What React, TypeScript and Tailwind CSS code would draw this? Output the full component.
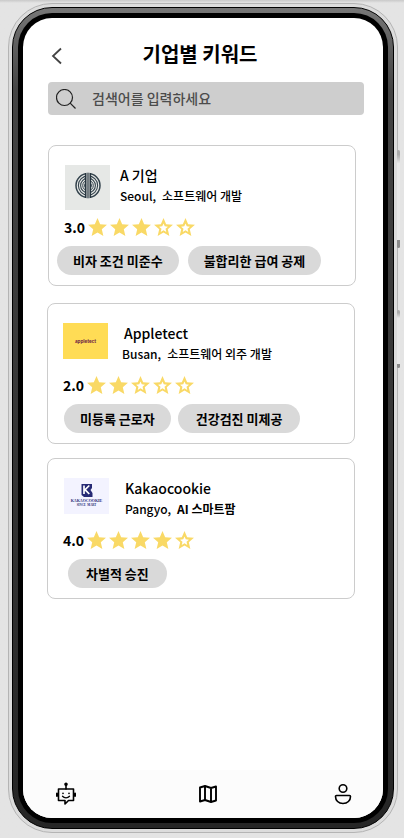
import type { ReactNode } from "react";

type Company = {
  name: string;
  city: string;
  field: string;
  fieldClass: string;
  rating: number;
  keywords: { text: string; padding: string }[];
  logo: ReactNode;
  cardClass: string;
  headClass: string;
  nameClass: string;
  chipsClass: string;
};

const STAR =
  "M12 17.27 18.18 21l-1.64-7.03L22 9.24l-7.19-.61L12 2 9.19 8.63 2 9.24l5.46 4.73L5.82 21z";
const STAR_HOLE =
  "M12 14.900l-2.900 1.750.77-3.300-2.560-2.220 3.380-.29L12 7.700l1.320 3.140 3.380.29-2.560 2.220.77 3.300z";

function Star({ filled }: { filled: boolean }) {
  return (
    <svg viewBox="2 2 20 19" className="h-[18px] w-[19px]" fill="#f9d966" aria-hidden="true">
      <path fillRule="evenodd" d={filled ? STAR : STAR + STAR_HOLE} />
    </svg>
  );
}

function RingsLogo() {
  return (
    <svg viewBox="0 0 45 45" className="h-[45px] w-[45px] shrink-0" role="img" aria-label="A 기업">
      <rect width="45" height="45" fill="#e6e8e6" />
      <g fill="none" stroke="#34434d">
        <circle cx="23" cy="20.500" r="12" strokeWidth="1.500" />
        <circle cx="23" cy="20.500" r="9.600" strokeWidth="1.100" />
        <circle cx="23" cy="20.500" r="7.400" strokeWidth="1.100" />
        <circle cx="23" cy="20.500" r="5.300" strokeWidth="1" />
      </g>
      <ellipse cx="23" cy="20.500" rx="4" ry="3" fill="#4a5860" />
      <rect x="20" y="8" width="6" height="25" fill="#e6e8e6" />
      <path d="M20.700 8v25M25.300 8v25" stroke="#27353f" strokeWidth="1.600" />
      <path d="M23 8v25" stroke="#27353f" strokeWidth="1.200" />
    </svg>
  );
}

function AppletectLogo() {
  return (
    <div className="flex h-9 w-[45px] shrink-0 items-center justify-center bg-[#ffdc55] font-['Lato','Open_Sans',sans-serif] text-[5px] leading-none font-black text-[#701c45]">
      appletect
    </div>
  );
}

function KakaocookieLogo() {
  return (
    <div className="flex h-9 w-[45px] shrink-0 flex-col items-center bg-[#f3f3ff] pt-[6px] font-['Liberation_Serif',serif] text-[#262a75]">
      <svg viewBox="0 0 12 13" className="h-[13px] w-3" aria-hidden="true">
        <path d="M0.500 0h10.500v4l-1.500 2 2 3v4H3l-2.500-2z" fill="#262a75" />
        <path d="M3 1.500v8.500M8.300 1.500 4 5.700 8.300 10" stroke="#fff" strokeWidth="1.700" fill="none" />
      </svg>
      <span className="mt-px text-[4px] leading-[5px] font-bold">KAKAOCOOKIE</span>
      <span className="text-[3px] leading-[4px] font-bold">SINCE &nbsp;MART</span>
    </div>
  );
}

const companies: Company[] = [
  {
    name: "A 기업",
    city: "Seoul,",
    field: "소프트웨어 개발",
    fieldClass: "font-medium",
    rating: 3,
    keywords: [
      { text: "비자 조건 미준수", padding: "px-4" },
      { text: "불합리한 급여 공제", padding: "px-4" },
    ],
    logo: <RingsLogo />,
    cardClass: "ml-px",
    headClass: "gap-[10px] pl-4",
    nameClass: "",
    chipsClass: "gap-[9px] pl-2",
  },
  {
    name: "Appletect",
    city: "Busan,",
    field: "소프트웨어 외주 개발",
    fieldClass: "font-medium",
    rating: 2,
    keywords: [
      { text: "미등록 근로자", padding: "px-4" },
      { text: "건강검진 미제공", padding: "px-[18px]" },
    ],
    logo: <AppletectLogo />,
    cardClass: "mr-px mt-[17px]",
    headClass: "gap-[14px] pl-[15px]",
    nameClass: "pl-0.5",
    chipsClass: "gap-[7px] pl-4",
  },
  {
    name: "Kakaocookie",
    city: "Pangyo,",
    field: "AI 스마트팜",
    fieldClass: "font-bold",
    rating: 4,
    keywords: [{ text: "차별적 승진", padding: "px-[18px]" }],
    logo: <KakaocookieLogo />,
    cardClass: "mr-px mt-[14px]",
    headClass: "gap-4 pl-4",
    nameClass: "",
    chipsClass: "pl-5",
  },
];

function CompanyCard({ company }: { company: Company }) {
  return (
    <li className={`rounded-lg border border-[#cccccc] pt-[19px] pb-[10px] ${company.cardClass}`}>
      <div className={`flex h-[45px] items-start ${company.headClass}`}>
        {company.logo}
        <div>
          <h2 className={`text-sm leading-5 font-medium ${company.nameClass}`}>{company.name}</h2>
          <p className="flex gap-[6px] text-xs leading-[22px] font-medium">
            <span>{company.city}</span>
            <span className={company.fieldClass}>{company.field}</span>
          </p>
        </div>
      </div>
      <div className="mt-[7px] flex h-5 items-center gap-[3px] pl-[15px]">
        <span className="text-sm leading-5 font-bold">{company.rating.toFixed(1)}</span>
        <div className="flex gap-[3px]">
          {[1, 2, 3, 4, 5].map((n) => (
            <Star key={n} filled={n <= company.rating} />
          ))}
        </div>
      </div>
      <div className={`mt-[9px] flex ${company.chipsClass}`}>
        {company.keywords.map(({ text, padding }) => (
          <button
            key={text}
            type="button"
            className={`h-[29px] rounded-full bg-[#d9d9d9] text-[13px] leading-5 font-bold whitespace-nowrap ${padding}`}
          >
            {text}
          </button>
        ))}
      </div>
    </li>
  );
}

function BottomNav() {
  return (
    <nav className="flex h-12 items-center justify-between bg-[#fcfcfc] pr-[31px] pl-8">
      <button type="button" aria-label="챗봇" className="w-[26px]">
        <svg viewBox="0 0 22 24" className="h-6 w-[22px]" fill="none" stroke="#000" strokeWidth="1.600" strokeLinejoin="round" strokeLinecap="round">
          <path d="M3.500 7h15v11.500h-5l-3.500 3.500v-3.500H3.500z" />
          <path d="M11 7V2.500" />
          <path d="M2 11.500v2.500M20 11.500v2.500" strokeWidth="2" />
          <circle cx="11" cy="2.300" r="1" fill="#000" />
          <path d="M7.500 14.300c1.800 2 5.200 2 7 0" strokeWidth="1.300" />
          <path d="M8 11.300h.01M14 11.300h.01" strokeWidth="1.700" />
        </svg>
      </button>
      <button type="button" aria-label="지도">
        <svg viewBox="0 0 20 20" className="h-5 w-5" fill="none" stroke="#000" strokeWidth="1.900" strokeLinejoin="round">
          <path d="M2 3.500 7 2l6 2 5-1.500v14L13 18l-6-2-5 1.500zM7 2v14M13 4v14" />
        </svg>
      </button>
      <button type="button" aria-label="내 정보">
        <svg viewBox="0 0 18 22" className="h-[22px] w-[18px]" fill="none" stroke="#000" strokeWidth="1.600">
          <circle cx="9" cy="5.500" r="3.800" />
          <path d="M2.500 12.500h13a1 1 0 0 1 1 1c0 4-3 7-7.500 7s-7.500-3-7.500-7a1 1 0 0 1 1-1z" />
        </svg>
      </button>
    </nav>
  );
}

export default function App() {
  return (
    <div className="flex min-h-screen flex-col bg-[#e4e4e4] bg-linear-to-b from-[#c9c9c9] to-[#e4e4e4] to-[3px] pt-[3px] pr-[6px] pb-[5px] pl-2 font-['Noto_Sans_CJK_KR',sans-serif] text-black">
      <div className="relative flex grow flex-col rounded-[44px] border border-[#b4b4b4] bg-[#dcdcdc] p-[3px]">
        <div className="absolute top-[146px] -right-[3px] h-[98px] w-[3px] rounded-full bg-linear-to-b from-[#aaaaaa] from-5% via-[#e8e8e8] via-15% to-[#e8e8e8] to-90% border-b-8 border-[#8a8a8a]" />
        <div className="absolute top-[306px] -right-[3px] h-[58px] w-[3px] rounded-full bg-linear-to-b from-[#aaaaaa] from-5% via-[#e8e8e8] via-15% to-[#e8e8e8] to-90% border-b-4 border-[#8a8a8a]" />
        <div className="flex grow flex-col rounded-[40px] border border-black bg-linear-to-b from-[#777777] via-[#444444] via-10% to-[#262626] p-[5px]">
          <div className="flex grow flex-col rounded-[34px] bg-black p-[5px]">
            <main className="flex grow flex-col overflow-hidden rounded-[29px] bg-white">
              <header className="relative flex h-16 items-end justify-center pb-[14px]">
                <button type="button" aria-label="뒤로" className="absolute bottom-[17px] left-7">
                  <svg viewBox="0 0 12 18" className="h-[18px] w-3" fill="none" stroke="#444" strokeWidth="1.800">
                    <path d="M10 1.500 2 9l8 7.500" />
                  </svg>
                </button>
                <h1 className="pr-1.5 text-xl leading-7 font-bold">기업별 키워드</h1>
              </header>
              <label className="mr-[19px] ml-[25px] flex h-[33px] items-center gap-4 rounded bg-[#cecece] pl-2">
                <svg viewBox="0 0 20 20" className="h-5 w-5 shrink-0" fill="none" stroke="#222" strokeWidth="1.200">
                  <circle cx="8.500" cy="8.500" r="8" />
                  <path d="m14.200 14.200 5.300 5.300" />
                </svg>
                <input
                  type="text"
                  aria-label="검색"
                  placeholder="검색어를 입력하세요"
                  className="min-w-0 grow bg-transparent pb-px text-sm font-medium outline-none placeholder:text-[#4c4c4c]"
                />
              </label>
              <ul className="mt-[30px] mr-[27px] ml-6 flex grow flex-col">
                {companies.map((company) => (
                  <CompanyCard key={company.name} company={company} />
                ))}
              </ul>
              <BottomNav />
            </main>
          </div>
        </div>
      </div>
    </div>
  );
}
